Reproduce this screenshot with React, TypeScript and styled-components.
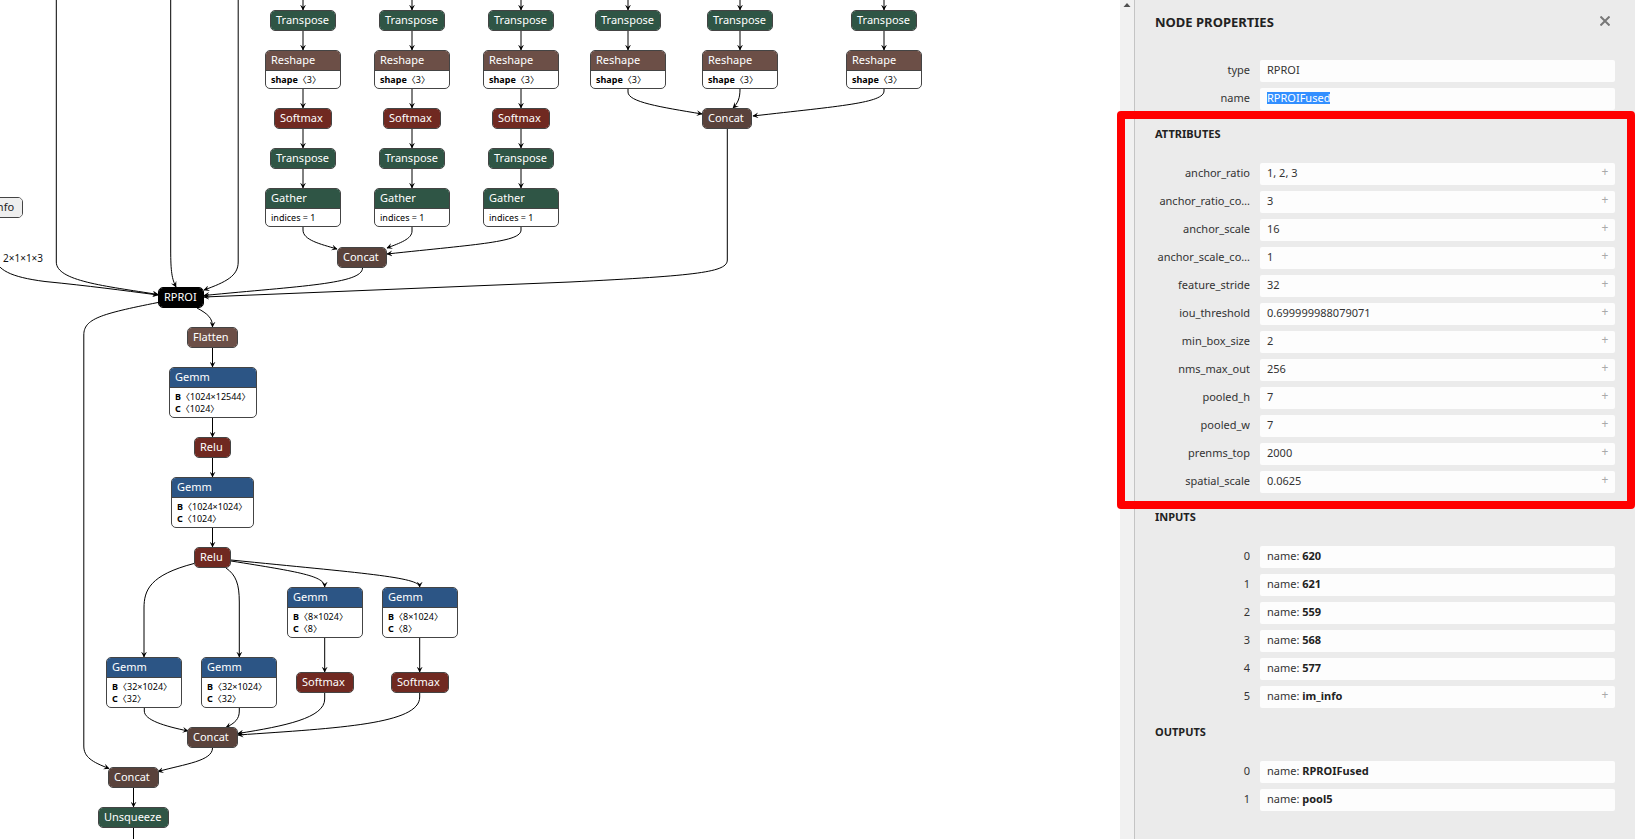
import React from "react";
import styled, { createGlobalStyle } from "styled-components";

const GlobalStyle = createGlobalStyle`
  * { box-sizing: border-box; }
  body {
    margin: 0;
    background: #fff;
    color: #333;
    font-family: "Noto Sans", "Noto Sans CJK JP", sans-serif;
    font-size: 11px;
    line-height: 16px;
  }
`;

const palette = {
  transform: "#2f5545",
  shape: "#6c4f47",
  activation: "#702921",
  tensor: "#59423b",
  layer: "#2c5585",
  custom: "#000000",
  input: "#eeeeee",
};
type Kind = keyof typeof palette;

const Page = styled.div`
  display: flex;
  height: 100vh;
  overflow: hidden;
`;

/* ---------- graph canvas ---------- */

const Canvas = styled.main`
  position: relative;
  flex: 1;
  min-width: 0;
  overflow: hidden;
`;

const EdgeLayer = styled.svg`
  position: absolute;
  inset: 0;
  width: 100%;
  height: 100%;
`;

const NodeBox = styled.div<{ $x: number; $y: number; $w: number; $dark: boolean }>`
  position: absolute;
  left: ${(p) => p.$x}px;
  top: ${(p) => p.$y}px;
  width: ${(p) => p.$w}px;
  border: 1px solid ${(p) => (p.$dark ? "#000" : "#444")};
  border-radius: 5px;
  overflow: hidden;
  background: #fff;
`;

const NodeTitle = styled.div<{ $kind: Kind }>`
  height: 19px;
  padding: 0 5px;
  line-height: 18px;
  white-space: nowrap;
  background: ${(p) => palette[p.$kind]};
  color: ${(p) => (p.$kind === "input" ? "#222" : "#fff")};
`;

const NodeBody = styled.div`
  padding: 3px 5px 2px;
  border-top: 1px solid #444;
  font-size: 9px;
  line-height: 12px;
  white-space: nowrap;
  color: #000;
`;

const EdgeLabel = styled.span`
  position: absolute;
  left: 3px;
  top: 250px;
  font-size: 10px;
  color: #111;
`;

interface GraphNode {
  title: string;
  kind: Kind;
  x: number;
  y: number;
  w: number;
  rows?: [string, string][];
}

const shapeRow: [string, string][] = [["shape", "〈3〉"]];
const columns = [303, 412, 521];
const sideColumns = [628, 740, 884];

const nodes: GraphNode[] = [
  ...[...columns, ...sideColumns].flatMap((c): GraphNode[] => [
    { title: "Transpose", kind: "transform", x: c - 33, y: 10, w: 66 },
    { title: "Reshape", kind: "shape", x: c - 38, y: 50, w: 76, rows: shapeRow },
  ]),
  ...columns.flatMap((c): GraphNode[] => [
    { title: "Softmax", kind: "activation", x: c - 29, y: 108, w: 58 },
    { title: "Transpose", kind: "transform", x: c - 33, y: 148, w: 66 },
    { title: "Gather", kind: "transform", x: c - 38, y: 188, w: 76, rows: [["", "indices = 1"]] },
  ]),
  { title: "Concat", kind: "tensor", x: 702, y: 108, w: 50 },
  { title: "Concat", kind: "tensor", x: 337, y: 247, w: 50 },
  { title: "im_info", kind: "input", x: -30, y: 197, w: 53 },
  { title: "RPROI", kind: "custom", x: 158, y: 287, w: 46 },
  { title: "Flatten", kind: "shape", x: 187, y: 327, w: 51 },
  { title: "Gemm", kind: "layer", x: 169, y: 367, w: 88, rows: [["B", "〈1024×12544〉"], ["C", "〈1024〉"]] },
  { title: "Relu", kind: "activation", x: 194, y: 437, w: 37 },
  { title: "Gemm", kind: "layer", x: 171, y: 477, w: 83, rows: [["B", "〈1024×1024〉"], ["C", "〈1024〉"]] },
  { title: "Relu", kind: "activation", x: 194, y: 547, w: 37 },
  { title: "Gemm", kind: "layer", x: 287, y: 587, w: 76, rows: [["B", "〈8×1024〉"], ["C", "〈8〉"]] },
  { title: "Gemm", kind: "layer", x: 382, y: 587, w: 76, rows: [["B", "〈8×1024〉"], ["C", "〈8〉"]] },
  { title: "Gemm", kind: "layer", x: 106, y: 657, w: 76, rows: [["B", "〈32×1024〉"], ["C", "〈32〉"]] },
  { title: "Gemm", kind: "layer", x: 201, y: 657, w: 76, rows: [["B", "〈32×1024〉"], ["C", "〈32〉"]] },
  { title: "Softmax", kind: "activation", x: 296, y: 672, w: 58 },
  { title: "Softmax", kind: "activation", x: 391, y: 672, w: 58 },
  { title: "Concat", kind: "tensor", x: 187, y: 727, w: 51 },
  { title: "Concat", kind: "tensor", x: 108, y: 767, w: 51 },
  { title: "Unsqueeze", kind: "transform", x: 98, y: 807, w: 71 },
];

const edges: string[] = [
  ...[...columns, ...sideColumns].flatMap((c) => [`M${c} 0V10`, `M${c} 31V50`]),
  ...columns.flatMap((c) => [`M${c} 89V108`, `M${c} 129V148`, `M${c} 169V188`]),
  "M303 227V230C303 240 320 244 337 249",
  "M412 227V231C412 239 400 243 387 248",
  "M521 227V230C521 242 480 244 387 254",
  "M628 89V92C628 102 660 107 702 114",
  "M740 89C740 98 738 103 733 108",
  "M884 89V91C884 103 840 106 753 116",
  "M-6 256C-3 270 10 277 45 281.500C90 286 120 290 158 295",
  "M56.300 0V262C56.300 281 105 286 158 294.500",
  "M170.700 0V250C170.700 272 172 279 176 287",
  "M238.200 0V262C238.200 276 226 282 204 290",
  "M362.500 268C362.500 284 300 286 204 295.500",
  "M727.300 129V260C727.300 272 700 275.500 570 282L204 297",
  "M158 302.500C100 314 83.800 319 83.800 335V746C83.800 757 92 762 109 768.500",
  "M197 308C208 314 212.500 318 212.500 327",
  "M212.500 348V367",
  "M212.500 418V437",
  "M212.500 458V477",
  "M212.500 528V547",
  "M194 563.500C150 575 144 590 144 608V657",
  "M226 568C236 575 239.300 584 239.300 602V657",
  "M231 561C300 572 324.700 576 324.700 587",
  "M231 560C360 573 419.700 577 419.700 587",
  "M324.700 638V672",
  "M419.700 638V672",
  "M144.300 708V711C144.300 720 164 726 188 731",
  "M239.300 708V711C239.300 719 235 723 226 727.500",
  "M324.700 693V699C324.700 718 285 726 238 733.500",
  "M419.700 693V697C419.700 724 340 728 238 735",
  "M212.500 748C212.500 761 185 764 158 771.500",
  "M133.500 788V807",
  "M133.500 828V848",
];

/* ---------- properties sidebar ---------- */

const Sidebar = styled.aside`
  display: flex;
  flex: 0 0 515px;
  max-width: 100%;
`;

const ScrollTrack = styled.div`
  display: flex;
  justify-content: center;
  width: 14px;
  padding-top: 3px;
  background: #f1f1f1;
`;

const Properties = styled.div`
  flex: 1;
  min-width: 0;
  padding: 12px 20px 20px;
  background: #ebebeb;
  border-left: 1px solid #c4c4c4;
`;

const PanelHeader = styled.header`
  display: flex;
  justify-content: space-between;
  height: 32px;
`;

const PanelTitle = styled.h1`
  margin: 0;
  font-size: 13px;
  line-height: 20px;
  color: #222;
`;

const CloseButton = styled.button`
  display: flex;
  align-items: center;
  justify-content: center;
  width: 20px;
  height: 18px;
  padding: 0;
  border: 0;
  background: none;
`;

const Section = styled.section`
  position: relative;
  padding-top: 16px;
`;

const SectionTitle = styled.h2`
  margin: 0 0 21px;
  font-size: 11px;
  line-height: 16px;
  color: #222;
`;

const List = styled.dl`
  display: flex;
  flex-direction: column;
  gap: 6px;
  margin: 0;
`;

const Row = styled.div`
  display: flex;
  gap: 10px;
  line-height: 20px;
`;

const Name = styled.dt`
  flex: 0 0 95px;
  overflow: hidden;
  text-align: right;
  text-overflow: ellipsis;
  white-space: nowrap;
`;

const Value = styled.dd`
  display: flex;
  flex: 1;
  justify-content: space-between;
  height: 22px;
  margin: 0;
  padding: 0 5px 0 7px;
  border-radius: 2px;
  background: #fdfdfd;
  b { color: #222; }
`;

const Selected = styled.mark`
  display: inline-block;
  height: 12px;
  line-height: 12px;
  background: #338fff;
  color: #fff;
`;

const Expand = styled.button`
  width: 10px;
  height: 18px;
  padding: 0;
  border: 0;
  background: none;
  font: inherit;
  font-size: 12px;
  line-height: 18px;
  color: #aaa;
`;

const Highlight = styled.div`
  position: absolute;
  inset: 1px -20px -16px -38px;
  border: 8px solid #f00;
  border-radius: 4px;
  pointer-events: none;
`;

interface Property {
  name: string;
  value: React.ReactNode;
  expandable?: boolean;
}

const attributes: Property[] = [
  ["anchor_ratio", "1, 2, 3"],
  ["anchor_ratio_co…", "3"],
  ["anchor_scale", "16"],
  ["anchor_scale_co…", "1"],
  ["feature_stride", "32"],
  ["iou_threshold", "0.699999988079071"],
  ["min_box_size", "2"],
  ["nms_max_out", "256"],
  ["pooled_h", "7"],
  ["pooled_w", "7"],
  ["prenms_top", "2000"],
  ["spatial_scale", "0.0625"],
].map(([name, value]) => ({ name, value, expandable: true }));

const connections = (names: string[]): Property[] =>
  names.map((n, i) => ({
    name: String(i),
    value: <span>name: <b>{n}</b></span>,
    expandable: n === "im_info",
  }));

const general: Property[] = [
  { name: "type", value: "RPROI" },
  { name: "name", value: <span><Selected>RPROIFused</Selected></span> },
];

function PropertyList({ items }: { items: Property[] }) {
  return (
    <List>
      {items.map((item) => (
        <Row key={item.name}>
          <Name>{item.name}</Name>
          <Value>
            {item.value}
            {item.expandable && (
              <Expand type="button" aria-label={`Expand ${item.name}`}>+</Expand>
            )}
          </Value>
        </Row>
      ))}
    </List>
  );
}

function Graph() {
  return (
    <Canvas>
      <EdgeLayer aria-hidden="true">
        <defs>
          <marker id="vee" viewBox="0 0 10 10" refX="9" refY="5" markerWidth="6" markerHeight="6" markerUnits="userSpaceOnUse" orient="auto">
            <path d="M0 0L10 5L0 10L4 5Z" />
          </marker>
        </defs>
        {edges.map((d) => (
          <path key={d} d={d} fill="none" stroke="#000" markerEnd="url(#vee)" />
        ))}
      </EdgeLayer>
      <EdgeLabel>2×1×1×3</EdgeLabel>
      {nodes.map((n) => (
        <NodeBox key={`${n.x}-${n.y}`} $x={n.x} $y={n.y} $w={n.w} $dark={n.kind === "custom"}>
          <NodeTitle $kind={n.kind}>{n.title}</NodeTitle>
          {n.rows && (
            <NodeBody>
              {n.rows.map(([key, text]) => (
                <div key={key}>
                  {key && <b>{key}</b>}
                  {text}
                </div>
              ))}
            </NodeBody>
          )}
        </NodeBox>
      ))}
    </Canvas>
  );
}

export default function App() {
  return (
    <Page>
      <GlobalStyle />
      <Graph />
      <Sidebar>
        <ScrollTrack>
          <svg width="8" height="4" viewBox="0 0 8 4" aria-hidden="true">
            <path d="M0.500 4L4 0L7.500 4Z" fill="#505050" />
          </svg>
        </ScrollTrack>
        <Properties>
          <PanelHeader>
            <PanelTitle>NODE PROPERTIES</PanelTitle>
            <CloseButton type="button" aria-label="Close">
              <svg width="10" height="10" viewBox="0 0 10 10" aria-hidden="true">
                <path d="M0.500 0.500L9.500 9.500M9.500 0.500L0.500 9.500" stroke="#777" strokeWidth="2" />
              </svg>
            </CloseButton>
          </PanelHeader>
          <Section>
            <PropertyList items={general} />
          </Section>
          <Section>
            <SectionTitle>ATTRIBUTES</SectionTitle>
            <PropertyList items={attributes} />
            <Highlight />
          </Section>
          <Section>
            <SectionTitle>INPUTS</SectionTitle>
            <PropertyList items={connections(["620", "621", "559", "568", "577", "im_info"])} />
          </Section>
          <Section>
            <SectionTitle>OUTPUTS</SectionTitle>
            <PropertyList items={connections(["RPROIFused", "pool5"])} />
          </Section>
        </Properties>
      </Sidebar>
    </Page>
  );
}
